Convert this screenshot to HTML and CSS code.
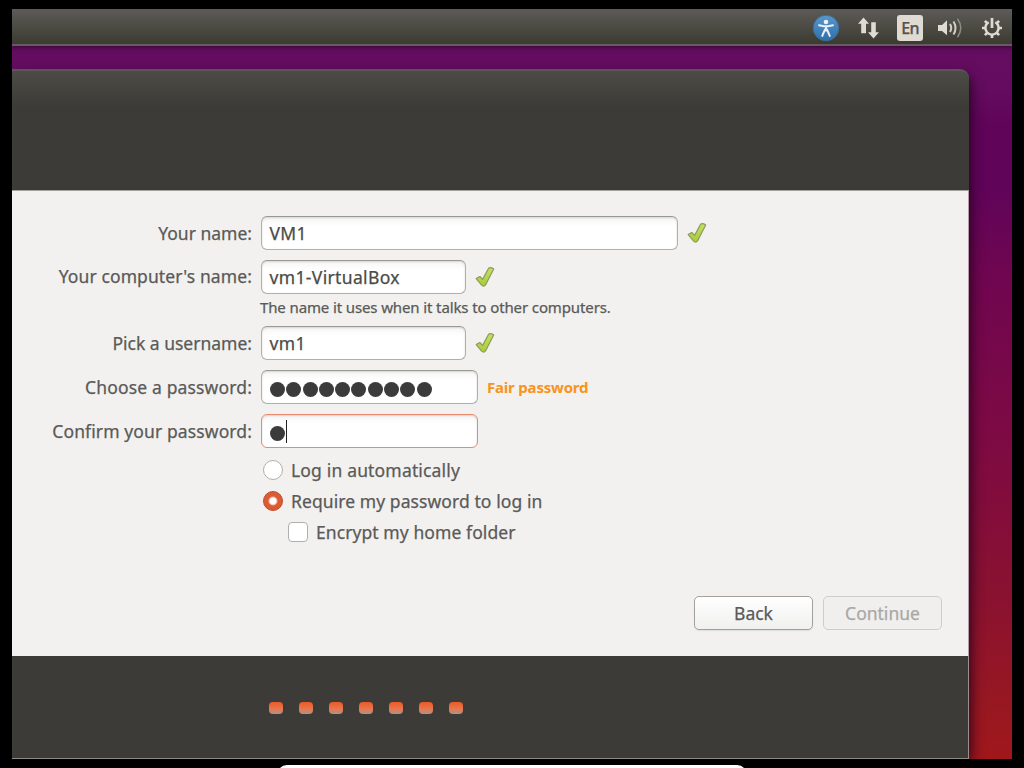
FILE: index.html
```
<!DOCTYPE html>
<html lang="en">
<head>
<meta charset="utf-8">
<title>Install</title>
<link rel="stylesheet" href="styles.css">
</head>
<body>
<svg class="defs" width="0" height="0" aria-hidden="true">
  <defs>
    <linearGradient id="leaf" x1="0" y1="0" x2="0" y2="1"><stop offset="0" stop-color="#c5e05c"/><stop offset="1" stop-color="#a9cb3c"/></linearGradient>
    <linearGradient id="blue" x1="0" y1="0" x2="0" y2="1"><stop offset="0" stop-color="#5a96c8"/><stop offset="1" stop-color="#2d70ad"/></linearGradient>
    <symbol id="tick" viewBox="0 0 20 22"><path d="M1.2 12.6 4.8 10.5 7.6 13.4 13.6 2.2Q15.5 .7 18.7 2.9L10.8 18.4Q9 21.4 6.6 19.1Z" fill="url(#leaf)" stroke="#8a9c62" stroke-width="1.2" stroke-linejoin="round"/></symbol>
  </defs>
</svg>
<div class="desktop">
  <header class="panel">
    <svg class="access" width="28" height="28" viewBox="0 0 28 28"><circle cx="14" cy="14" r="12.8" fill="url(#blue)" stroke="#3d6b95"/><circle cx="14" cy="8" r="2.3" fill="#e9f0f6"/><path d="M7 11.2 12 12.2H16L21 11.2M14 12V16.5M13 15.5 10.2 22M15 15.5 17.8 22" fill="none" stroke="#e9f0f6" stroke-width="1.9" stroke-linecap="round"/></svg>
    <svg class="network" width="23" height="22" viewBox="0 0 23 22"><path d="M6.5.5 12 6.8H9V16.3H4.2V6.8H1Z" fill="#dfdbd2"/><path d="M16.5 21.5 11 15.2H14.2V5.2H18.8V15.2H22Z" fill="#dfdbd2"/></svg>
    <span class="lang">En</span>
    <svg class="sound" width="25" height="22" viewBox="0 0 25 22"><path d="M0 8H4L9 3.2V18.2L4 14H0Z" fill="#dfdbd2"/><path d="M12 7Q14.5 11 12 15M15.5 4.5Q19.5 11 15.5 17.5" fill="none" stroke="#d2cec5" stroke-width="2"/><path d="M19.5 1.8Q26 11 19.5 20.2" fill="none" stroke="#8e8c83" stroke-width="1.5"/></svg>
    <svg class="power" width="22" height="22" viewBox="0 0 22 22"><g fill="none" stroke="#dfdbd2"><path d="M7.7 5.3A6.6 6.6 0 1 0 14.3 5.3" stroke-width="2.4"/><path d="M11 1V11M1 11H4.5M17.5 11H21M11 17.5V21M3.9 18.1 6.4 15.6M15.6 15.6 18.1 18.1M3.9 3.9 6.4 6.4M15.6 6.4 18.1 3.9" stroke-width="2.7"/></g></svg>
  </header>
  <main class="window">
    <div class="window-head"></div>
    <section class="content">
      <form class="form">
        <div class="row"><label class="label">Your name:</label><div class="field wide">VM1</div><svg class="tick"><use href="#tick"/></svg></div>
        <div class="row"><label class="label computer">Your computer's name:</label><div class="field medium">vm1-VirtualBox</div><svg class="tick"><use href="#tick"/></svg></div>
        <p class="hint">The name it uses when it talks to other computers.</p>
        <div class="row"><label class="label">Pick a username:</label><div class="field medium">vm1</div><svg class="tick"><use href="#tick"/></svg></div>
        <div class="row"><label class="label choose">Choose a password:</label><div class="field secret"><i></i><i></i><i></i><i></i><i></i><i></i><i></i><i></i><i></i><i></i></div><strong class="strength">Fair password</strong></div>
        <div class="row"><label class="label confirm">Confirm your password:</label><div class="field secret focused"><i></i><b class="caret"></b></div></div>
        <div class="options">
          <div class="option automatic"><span class="radio"></span><span>Log in automatically</span></div>
          <div class="option"><span class="radio checked"></span><span>Require my password to log in</span></div>
          <div class="option nested"><span class="checkbox"></span><span>Encrypt my home folder</span></div>
        </div>
      </form>
      <div class="actions"><div class="button">Back</div><div class="button disabled">Continue</div></div>
    </section>
    <footer class="progress"><i></i><i></i><i></i><i></i><i></i><i></i><i></i></footer>
  </main>
</div>
<div class="sheet"></div>
</body>
</html>
```

FILE: styles.css
```
* { box-sizing: border-box; }
body { margin: 0; height: 768px; overflow: hidden; background: #000; color: #5a5a58; font: 17.5px/24px "Noto Sans", sans-serif; -webkit-text-stroke: .25px currentColor; }
.defs { position: absolute; }
.desktop { height: 750px; margin: 9px 12px 0; overflow: hidden; background: linear-gradient(180deg, #650d61 0, #640d60 75px, #60045a 115px, #60045a 180px, #700650 270px, #7d0a43 430px, #891131 580px, #981821 700px, #a0171b 750px); }
.panel { height: 37px; display: flex; align-items: center; justify-content: flex-end; padding: 3px 9px 0 0; background: linear-gradient(#5d5b57, #3c3c33 34px); border-bottom: 2px solid #685a61; box-shadow: 0 1px 5px #300630; position: relative; }
.access { margin-right: 17px; }
.network { margin-right: 17px; }
.lang { width: 26px; height: 26px; margin-right: 15px; border-radius: 3px; background: #dfdbd2; color: #55534d; font-size: 16px; line-height: 26px; font-weight: 500; text-align: center; letter-spacing: -.8px; }
.sound { margin-right: 18px; }
.window { width: 957px; height: 690px; margin-top: 23px; border-top-right-radius: 9px; box-shadow: 3px 5px 14px -2px #20001b; position: relative; }
.window-head { height: 122px; border-top: 2px solid #5d535a; border-top-right-radius: 9px; background: linear-gradient(#4d4b45, #3c3b37 36px); border-bottom: 1px solid #a3a19c; }
.content { height: 465px; padding-top: 25px; background: #f2f1ef; border-right: 1px solid #b59eaa; }
.form { margin: 0; }
.row { height: 34px; margin-bottom: 10px; display: flex; align-items: center; }
.label { width: 240px; margin-right: 8.5px; text-align: right; white-space: nowrap; }
.computer { letter-spacing: .1px; padding-bottom: 2px; }
.choose { letter-spacing: .15px; }
.confirm { letter-spacing: .11px; }
.field { height: 34px; padding: 0 8px; border: 1px solid #b0afac; border-top-color: #9a9996; border-radius: 6px; background: linear-gradient(#f5f5f5, #fff 9px); box-shadow: inset 0 1px 2px #d5d4d2; color: #4b4b48; line-height: 33px; letter-spacing: .35px; white-space: nowrap; }
.wide { width: 417.5px; }
.medium { width: 205.5px; }
.secret { width: 217.5px; display: flex; align-items: center; gap: 1.3px; padding: 4px 8px 0 8.5px; }
.secret i { width: 15px; height: 15px; border-radius: 50%; background: #3b3b3b; }
.caret { width: 1px; height: 23px; margin: -3px 0 0 -.3px; background: #222; }
.focused { border-color: #e88b70; }
.tick { width: 20px; height: 22px; margin-left: 9px; }
.hint { height: 22px; margin: -6px 0 6px 248px; font-size: 15px; line-height: 19px; letter-spacing: -.12px; white-space: nowrap; }
.strength { margin-left: 9px; font-size: 15px; line-height: 22px; padding-bottom: 1px; color: #f7941c; letter-spacing: -.2px; white-space: nowrap; -webkit-text-stroke: 0; }
.options { margin: -4px 0 0 251px; }
.option { height: 31.5px; display: flex; align-items: center; letter-spacing: .08px; white-space: nowrap; }
.automatic { letter-spacing: .17px; }
.nested { margin-left: 25px; height: 30px; }
.radio, .checkbox { width: 20px; height: 20px; margin-right: 8px; border: 1px solid #b0afac; background: #fff; }
.radio { border-radius: 50%; }
.checked { border: 1px solid #bd4a26; background: radial-gradient(circle, #fff 0 3px, #dc5b34 5px); }
.checkbox { border-radius: 4px; }
.actions { display: flex; justify-content: flex-end; gap: 10px; margin: 49px 26px 0 0; }
.button { width: 119px; height: 34px; border: 1px solid #a3a19d; border-radius: 5px; background: linear-gradient(#fff, #f0f0ef); line-height: 32px; text-align: center; box-shadow: 0 1px 1px #ddd; }
.disabled { color: #a8a8a5; background: #f0efee; border-color: #cecdca; box-shadow: none; }
.progress { height: 103px; display: flex; gap: 16px; padding: 46px 0 0 257px; background: #3c3b37; border-right: 1px solid #9b8f90; border-bottom: 1px solid #8b8a85; }
.progress i { width: 14px; height: 12px; border-radius: 4px; background: linear-gradient(#ed5927, #e87750 60%, #a89589); }
.sheet { width: 470px; height: 20px; margin: 6px 0 0 277px; border-radius: 10px; background: #fff; }
```
